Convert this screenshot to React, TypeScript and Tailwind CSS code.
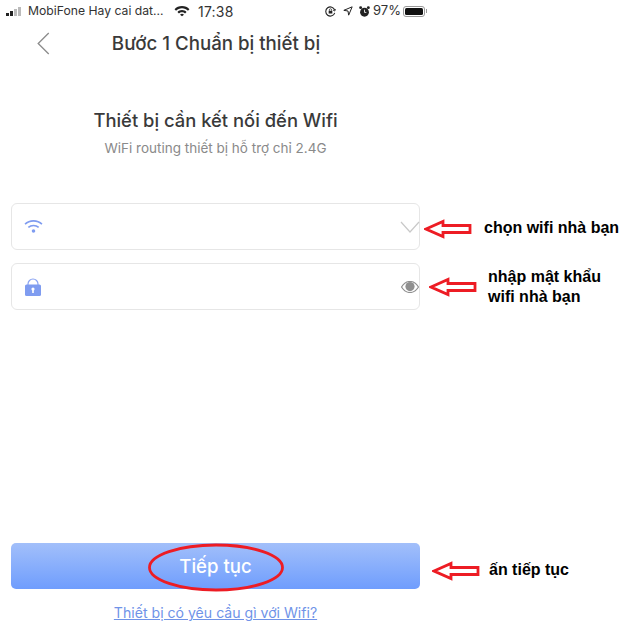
import React from "react";

const RedArrow = ({ className }: { className: string }) => (
  <svg viewBox="0 0 48 20" className={className} fill="none">
    <path d="M2 10 L19 2.5 L19 6.5 L46 6.5 L46 13.5 L19 13.5 L19 17.5 Z" stroke="#ed1c24" strokeWidth="2.8" strokeLinejoin="miter" fill="#fff" />
  </svg>
);

const StatusBar = () => (
  <div className="flex items-center h-[22px] pl-[6px] pr-[4px] text-[#333] relative">
    <div className="flex items-end gap-[1px] h-[9px] w-[17px]">
      <span className="w-[3px] h-[3px] bg-[#222]" />
      <span className="w-[3px] h-[5px] bg-[#222]" />
      <span className="w-[3px] h-[7px] bg-[#bbb]" />
      <span className="w-[3px] h-[9px] bg-[#bbb]" />
    </div>
    <span className="ml-[5px] w-[137px] text-[12.2px] whitespace-nowrap">MobiFone Hay cai dat...</span>
    <svg viewBox="0 0 18 12" className="w-[16px] h-[12px] ml-[9px]" fill="#222">
      <path d="M9 0.5C5.6 0.5 2.7 1.8 0.6 3.9L2.3 5.6C4 3.9 6.4 2.9 9 2.9s5 1 6.7 2.7l1.7-1.7C15.3 1.8 12.4 0.5 9 0.5z" />
      <path d="M9 5C7 5 5.2 5.8 3.9 7.1l1.7 1.7C6.5 8 7.7 7.4 9 7.4s2.5.6 3.4 1.4l1.7-1.7C12.8 5.8 11 5 9 5z" />
      <path d="M9 9.2c-.9 0-1.6.3-2.2.9L9 12l2.2-1.9c-.6-.6-1.3-.9-2.2-.9z" />
    </svg>
    <span className="ml-[8px] w-[48px] text-[14px] tracking-[0.2px]">17:38</span>
    <div className="flex-1" />
    <svg viewBox="0 0 12 12" className="w-[11px] h-[11px]" fill="none" stroke="#222" strokeWidth="1.2">
      <path d="M10.6 7.5A5 5 0 1 1 10.6 4.5" />
      <path d="M11.5 3.5 L10.6 5.5 L8.8 4.4" strokeWidth="1" />
      <rect x="4" y="5.2" width="4" height="3" fill="#222" stroke="none" />
      <path d="M4.8 5.2V4.2a1.2 1.2 0 0 1 2.4 0v1" strokeWidth="0.8" />
    </svg>
    <svg viewBox="0 0 12 12" className="w-[10px] h-[10px] ml-[7px]" fill="none" stroke="#222" strokeWidth="1.2" strokeLinejoin="round">
      <path d="M11 1 L1 5.2 L6 6 L6.8 11 Z" />
    </svg>
    <svg viewBox="0 0 12 12" className="w-[11px] h-[11px] ml-[6px]" fill="#222">
      <circle cx="6" cy="6.8" r="4.8" />
      <circle cx="1.8" cy="1.8" r="1.6" />
      <circle cx="10.2" cy="1.8" r="1.6" />
      <path d="M6 4v3h2" stroke="#fff" strokeWidth="0.9" fill="none" />
    </svg>
    <span className="ml-[3px] text-[13px]">97%</span>
    <div className="ml-[2px] w-[22px] h-[11px] rounded-[3px] border border-[#999] p-[1px] flex">
      <span className="flex-1 bg-[#111] rounded-[1.5px]" />
    </div>
    <span className="ml-[1px] w-[1px] h-[4px] bg-[#999]" />
  </div>
);

const NavBar = () => (
  <div className="relative flex items-center justify-center h-[44px]">
    <svg viewBox="0 0 14 24" className="absolute left-[36px] top-[10px] w-[14px] h-[23px]" fill="none" stroke="#8c8c8c" strokeWidth="1.4">
      <path d="M13 1 L2 12 L13 23" />
    </svg>
    <h1 className="text-[18.7px] font-medium text-[#3a3a3a] ml-[1px]">Bước 1 Chuẩn bị thiết bị</h1>
  </div>
);

const FieldBox = ({ icon, trailing }: { icon: React.ReactNode; trailing: React.ReactNode }) => (
  <div className="flex items-center justify-between h-[47px] border border-[#e6e6e6] rounded-[6px] pl-[12px] bg-white">
    {icon}
    {trailing}
  </div>
);

export default function App() {
  return (
    <div className="relative w-[629px] h-[642px] bg-white overflow-hidden font-['Inter','Liberation_Sans',sans-serif]">
      <div className="w-[431px] h-full flex flex-col">
        <StatusBar />
        <NavBar />
        <div className="mt-[42px] text-center text-[18.4px] font-medium leading-[24px] text-[#3a3a3a]">Thiết bị cần kết nối đến Wifi</div>
        <div className="mt-[7px] text-center text-[13.5px] leading-[18px] text-[#8a8a8a]">WiFi routing thiết bị hỗ trợ chỉ 2.4G</div>

        <div className="mt-[46px] ml-[11px] w-[409px] flex flex-col gap-[13px]">
          <FieldBox
            icon={
              <svg viewBox="0 0 20 16" className="w-[19px] h-[15px]" fill="none" stroke="#7f9cf0" strokeWidth="1.7">
                <path d="M1 5.5C5.8 0.8 14.2 0.8 19 5.5" />
                <path d="M4.5 9C7.5 6.2 12.5 6.2 15.5 9" />
                <circle cx="10" cy="12.8" r="1.9" fill="#7f9cf0" stroke="none" />
              </svg>
            }
            trailing={
              <svg viewBox="0 0 20 12" className="w-[20px] h-[12px] mr-[-1px]" fill="none" stroke="#c9c9c9" strokeWidth="1.2">
                <path d="M1 1 L10 11 L19 1" />
              </svg>
            }
          />
          <FieldBox
            icon={
              <svg viewBox="0 0 16 18" className="w-[16px] h-[18px] ml-[1px] mt-[1px]" fill="none">
                <path d="M3 7V6a5 5 0 0 1 10 0V7" stroke="#8aa3f2" strokeWidth="1.2" />
                <rect x="0" y="6.5" width="16" height="11.5" rx="1.5" fill="#7f9cf0" />
                <circle cx="8" cy="11" r="1.6" fill="#fff" />
                <rect x="7.2" y="11.5" width="1.6" height="3.5" fill="#fff" />
              </svg>
            }
            trailing={
              <svg viewBox="0 0 18 12" className="w-[18px] h-[12px]">
                <path d="M0.5 6C3 2 6 0.5 9 0.5S15 2 17.5 6C15 10 12 11.5 9 11.5S3 10 0.5 6Z" fill="#fff" stroke="#8f8f8f" strokeWidth="1.2" />
                <circle cx="9" cy="5.6" r="4.6" fill="#8f8f8f" />
              </svg>
            }
          />
        </div>

        <div className="flex-1" />

        <button className="ml-[11px] w-[409px] h-[46px] rounded-[5px] bg-gradient-to-b from-[#a2bffa] to-[#6f9dfd] text-white text-[18.6px] font-medium pt-[1px]">
          Tiếp tục
        </button>
        <a className="mt-[14px] mb-[19px] text-center text-[14.1px] leading-[20px] text-[#6f93e8] underline">Thiết bị có yêu cầu gì với Wifi?</a>
      </div>

      {/* annotations drawn over the screenshot */}
      <svg viewBox="0 0 136 50" className="absolute left-[148px] top-[543px] w-[136px] h-[50px]" fill="none">
        <ellipse cx="68" cy="24.5" rx="66.5" ry="22.5" stroke="#ed1c24" strokeWidth="2.8" />
      </svg>
      <RedArrow className="absolute left-[424px] top-[219px] w-[48px] h-[20px]" />
      <RedArrow className="absolute left-[429px] top-[277px] w-[48px] h-[20px]" />
      <RedArrow className="absolute left-[432px] top-[561px] w-[48px] h-[20px]" />
      <div className="absolute inset-0 pointer-events-none font-['Liberation_Sans',sans-serif] font-bold text-[16px] text-[#000]">
        <span className="absolute left-[484px] top-[216px] whitespace-nowrap">chọn wifi nhà bạn</span>
        <div className="absolute left-[488px] top-[267px] leading-[20px]">
          nhập mật khẩu
          <br />
          wifi nhà bạn
        </div>
        <span className="absolute left-[489px] top-[558px] whitespace-nowrap">ấn tiếp tục</span>
      </div>
    </div>
  );
}
